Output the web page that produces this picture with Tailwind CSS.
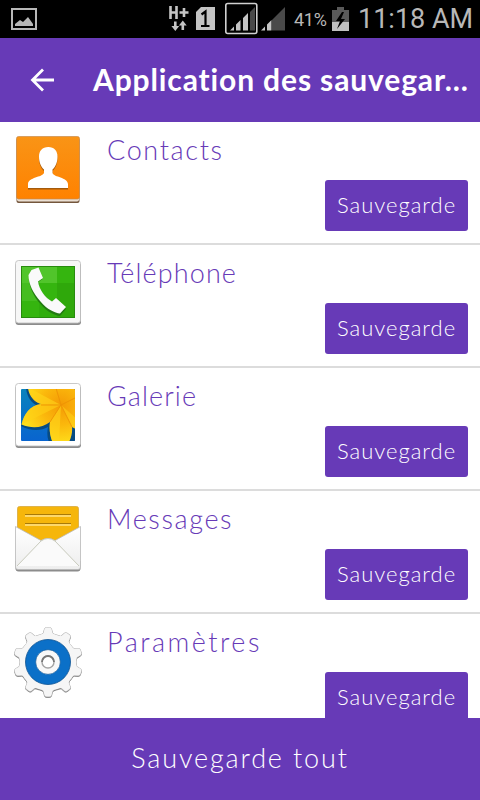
<!DOCTYPE html>
<html lang="fr">

<head>
    <meta charset="UTF-8">
    <meta name="viewport" content="width=device-width, initial-scale=1.0">
    <title>Application des sauvegardes</title>
    <script src="https://cdn.jsdelivr.net/npm/@tailwindcss/browser@4"></script>
</head>

<body class="flex h-[800px] w-[480px] flex-col overflow-hidden bg-white font-['Lato',sans-serif]">
    <!-- status bar -->
    <div class="flex h-[38px] shrink-0 items-center bg-black pl-[11px] pr-[7px] font-['Roboto',sans-serif] text-[#b8b8b8]">
        <svg class="h-[22px] w-[26px]" viewBox="0 0 26 22">
            <rect x="1" y="1" width="24" height="20" fill="none" stroke="#b8b8b8" stroke-width="2" />
            <path d="M4 18v-2l5-4 3 2 5-5 5 7v2z" fill="#b8b8b8" />
        </svg>
        <svg class="ml-auto h-[38px] w-[120px] shrink-0" viewBox="167 0 120 38">
            <path d="M170.500 6v13M176.500 6v13M170.500 12.500h6M184 8v9M179.500 12.500h9" stroke="#c4c4c4" stroke-width="2.600" fill="none" />
            <path d="M174 21.500h2.600v4.500h2.600l-3.900 5-3.900-5h2.600zM181.500 30h2.600v-4.500h2.600l-3.900-5-3.900 5h2.600z" fill="#c4c4c4" />
            <path d="M196 12l5-5h14v23h-19z" fill="#c4c4c4" />
            <path d="M201.500 14.500l4-3V26M201 26h8.500" stroke="#000" stroke-width="2.200" fill="none" />
            <rect x="225.800" y="3.500" width="31" height="30" rx="2" fill="none" stroke="#d0d0d0" stroke-width="1.600" />
            <path d="M230 30.500h4v-4zM236 30.500h4.500V20l-4.500 4.500zM243 30.500h5V13l-5 5z" fill="#c4c4c4" />
            <path d="M250 30.500h5V7l-5 5z" fill="#4a4a4a" />
            <path d="M272 30.500h13V7l-13 13z" fill="#4a4a4a" />
            <path d="M261 30.500h4v-4zM267 30.500h4.500V20l-4.500 4.500z" fill="#c4c4c4" />
        </svg>
        <span class="ml-[7px] w-[34px] whitespace-nowrap pt-[2px] text-[18px] leading-[38px] tracking-[-0.3px]">41%</span>
        <svg class="ml-[4px] h-[24px] w-[17px] shrink-0" viewBox="0 0 17 24">
            <path d="M0 3h5V0h7v3h5v21H0z" fill="#5a5a5a" />
            <path d="M0 15h17v9H0z" fill="#c0c0c0" />
            <path d="M10 5L4 14h4l-3 8 8-10H9l3-7z" fill="#000" />
        </svg>
        <span class="ml-[9px] w-[115px] whitespace-nowrap text-[27px] leading-[38px]">11:18 AM</span>
    </div>

    <!-- header -->
    <header class="flex h-[84px] shrink-0 items-center bg-[#673ab7] pl-[30px] text-white">
        <svg class="h-[24px] w-[25px] shrink-0" viewBox="0 0 25 24">
            <path d="M13 1.500L2.500 12 13 22.500M2.500 12H24" fill="none" stroke="#fff" stroke-width="2.800" />
        </svg>
        <h1 class="ml-[38px] whitespace-nowrap pb-[2px] text-[30px] font-bold leading-[40px] tracking-[0.87px]">Application des sauvegar...</h1>
    </header>

    <!-- app list -->
    <main class="min-h-0 flex-1 overflow-hidden text-[#673ab7]">
        <div class="flex h-[123px] border-b-2 border-[#dcdcdc] pl-3 pr-3 pt-2">
            <svg class="h-[76px] w-[72px] shrink-0" viewBox="12 8 72 76">
                <defs>
                    <linearGradient id="orange" x1="0" y1="0" x2="0" y2="1">
                        <stop offset="0" stop-color="#f99416" />
                        <stop offset="1" stop-color="#ff8200" />
                    </linearGradient>
                </defs>
                <rect x="16.500" y="16" width="63" height="65" rx="2" fill="#74563c" />
                <rect x="17" y="15" width="62" height="64.500" rx="2" fill="#eadfd3" />
                <rect x="16.500" y="14.500" width="63" height="62.500" rx="2" fill="url(#orange)" stroke="#c98b4c" stroke-width=".7" />
                <path d="M48.300 26.500c-6 0-9.300 4-9.300 9.500 0 6 2 10.500 5 13v3.500c-2 4.500-15.500 4-16 11v4h40v-4c-.500-7-14-6.500-15.500-11V49c3-2.500 5-7 5-13 0-5.500-3.200-9.500-9.200-9.500z" fill="#a45a0c" />
                <path d="M48.300 25c-6 0-9.300 4-9.300 9.500 0 6 2 10.500 5 13V51c-2 4.500-15.500 4-16 11v4h40v-4c-.500-7-14-6.500-15.500-11v-3.500c3-2.500 5-7 5-13 0-5.500-3.200-9.500-9.200-9.500z" fill="#fff" />
            </svg>
            <h2 class="ml-[23px] text-[27px] font-light leading-[40px] tracking-[1.65px]">Contacts</h2>
            <button class="mb-3 ml-auto h-[51px] w-[143px] self-end rounded-[3px] bg-[#673ab7] pb-[2px] text-[22px] font-light tracking-[1px] text-white">Sauvegarde</button>
        </div>

        <div class="flex h-[123px] border-b-2 border-[#dcdcdc] pl-3 pr-3 pt-2">
            <svg class="h-[76px] w-[72px] shrink-0" viewBox="12 8 72 76">
                <rect x="15.500" y="18" width="65.500" height="62" rx="3" fill="#8c8c8c" />
                <rect x="15.500" y="15.500" width="65" height="62.500" rx="3" fill="#f7f7f7" stroke="#bbb" stroke-width=".8" />
                <rect x="21.500" y="21.500" width="53" height="51" fill="#35b50f" stroke="#278b0d" />
                <path d="M22 22h35v16H22z" fill="#51c52b" />
                <path d="M22 38h17v18H22z" fill="#45bd20" />
                <path d="M57 38h17v34H57z" fill="#2fa80b" />
                <path d="M39 56h18v16H39z" fill="#30ad0d" />
                <path d="M29 32l3-5 6-3 4.500 10-4.500 3c1.500 9 7 15.500 14 20l4-3.500L66 64l-6 7c-5-.500-13-4-19.500-12C33 51 29 41 29 32z" fill="#237b12" />
                <path d="M28.500 30l3-5 7-2.500 4.500 10.500-5 3.500c1.500 8.500 7 16 14 20l4-3.500L66 62l-6 6.500c-5-.500-13-4-19.500-12C33 48 28.500 39 28.500 30z" fill="#fafafa" />
            </svg>
            <h2 class="ml-[23px] text-[27px] font-light leading-[40px] tracking-[1.1px]">Téléphone</h2>
            <button class="mb-3 ml-auto h-[51px] w-[143px] self-end rounded-[3px] bg-[#673ab7] pb-[2px] text-[22px] font-light tracking-[1px] text-white">Sauvegarde</button>
        </div>

        <div class="flex h-[123px] border-b-2 border-[#dcdcdc] pl-3 pr-3 pt-2">
            <svg class="h-[76px] w-[72px] shrink-0" viewBox="12 8 72 76">
                <defs>
                    <clipPath id="photo">
                        <rect x="21" y="21" width="54" height="52" rx="1" />
                    </clipPath>
                    <linearGradient id="sky" x1="0" y1="0" x2="0" y2="1">
                        <stop offset="0" stop-color="#0a83bd" />
                        <stop offset="1" stop-color="#0964cf" />
                    </linearGradient>
                    <radialGradient id="petal" gradientUnits="userSpaceOnUse" cx="61" cy="37" r="40">
                        <stop offset="0" stop-color="#f49a05" />
                        <stop offset=".5" stop-color="#fbb80c" />
                        <stop offset="1" stop-color="#ffe01c" />
                    </radialGradient>
                </defs>
                <rect x="15.500" y="18" width="65.500" height="62" rx="3" fill="#8c8c8c" />
                <rect x="15.500" y="15.500" width="65" height="62.500" rx="3" fill="#fff" stroke="#bbb" stroke-width=".8" />
                <g clip-path="url(#photo)">
                    <rect x="21" y="21" width="54" height="52" fill="url(#sky)" />
                    <path d="M26 20c1 9 5 15 12 18-9 2-14 10-17 20 9 5 20 5 27 1-1 5-1 10 1 15h26V20z" fill="#074b83" />
                    <!-- petals -->
                    <path d="M28 20c1 8 6 14 13 16-11 1-17 10-19.500 20.500C32 61 42 60 50 54c-1 7 0 14 2.500 20H69c2.500-5 3.500-10 3-15l4 2V20z" fill="url(#petal)" />
                    <path d="M61 37L41 36C30 38 24 46 21.500 56.500z" fill="#ffd015" opacity=".6" />
                    <path d="M61 37L50 54c-1 7 0 14 2.500 20H59z" fill="#ffd51a" opacity=".6" />
                    <path d="M61 37L29 20c2 9 7 15 12 16z" fill="#ffd51a" opacity=".6" />
                    <path d="M61 37l11 22 4 2V50z" fill="#ffd51a" opacity=".5" />
                    <path d="M61 37L50 54M61 37l11 22M61 37l14-7M61 37l-5-17M61 37H41" stroke="#ed9206" stroke-width=".9" fill="none" />
                </g>
            </svg>
            <h2 class="ml-[23px] text-[27px] font-light leading-[40px] tracking-[1.1px]">Galerie</h2>
            <button class="mb-3 ml-auto h-[51px] w-[143px] self-end rounded-[3px] bg-[#673ab7] pb-[2px] text-[22px] font-light tracking-[1px] text-white">Sauvegarde</button>
        </div>

        <div class="flex h-[123px] border-b-2 border-[#dcdcdc] pl-3 pr-3 pt-2">
            <svg class="h-[76px] w-[72px] shrink-0" viewBox="12 8 72 76">
                <defs>
                    <linearGradient id="paper" x1="0" y1="0" x2="0" y2="1">
                        <stop offset="0" stop-color="#fff" />
                        <stop offset="1" stop-color="#ededed" />
                    </linearGradient>
                </defs>
                <rect x="17.500" y="15.500" width="61" height="45" rx="2" fill="#f6b60b" stroke="#d8a83c" stroke-width=".8" />
                <path d="M25 23.500h46M25 32.500h46" stroke="#a87a08" stroke-width="1" />
                <path d="M25 25h46M25 34h46" stroke="#ffe48c" stroke-width="1.500" />
                <path d="M15.500 70v7.500q0 3 3 3h59q3 0 3-3V70z" fill="#8c8c8c" />
                <path d="M15.500 35.500L41 49.500q7-4 14 0l25.500-14V76q0 2.500-2.500 2.500H18q-2.500 0-2.500-2.500z" fill="url(#paper)" stroke="#b8b8b8" stroke-width=".8" />
                <path d="M17 75L41 50q7-5 14 0l24 25" fill="#fafafa" stroke="#c9cbbd" />
            </svg>
            <h2 class="ml-[23px] text-[27px] font-light leading-[40px] tracking-[1.6px]">Messages</h2>
            <button class="mb-3 ml-auto h-[51px] w-[143px] self-end rounded-[3px] bg-[#673ab7] pb-[2px] text-[22px] font-light tracking-[1px] text-white">Sauvegarde</button>
        </div>

        <div class="flex h-[123px] border-b-2 border-[#dcdcdc] pl-3 pr-3 pt-2">
            <svg class="h-[76px] w-[72px] shrink-0" viewBox="12 8 72 76">
                <defs>
                    <g id="tooth">
                        <path d="M40 22l3.500-3 1-4q.500-1.500 2-1.500h3q1.500 0 2 1.500l1 4 3.500 3z" />
                    </g>
                    <g id="gear">
                        <circle cx="48" cy="48" r="28.500" />
                        <use href="#tooth" />
                        <use href="#tooth" transform="rotate(36 48 48)" />
                        <use href="#tooth" transform="rotate(72 48 48)" />
                        <use href="#tooth" transform="rotate(108 48 48)" />
                        <use href="#tooth" transform="rotate(144 48 48)" />
                        <use href="#tooth" transform="rotate(180 48 48)" />
                        <use href="#tooth" transform="rotate(216 48 48)" />
                        <use href="#tooth" transform="rotate(252 48 48)" />
                        <use href="#tooth" transform="rotate(288 48 48)" />
                        <use href="#tooth" transform="rotate(324 48 48)" />
                    </g>
                </defs>
                <use href="#gear" y="1" fill="#777" stroke="#777" stroke-width=".6" />
                <use href="#gear" fill="#b5b5b5" stroke="#b5b5b5" stroke-width="1" />
                <use href="#gear" fill="#f6f6f6" />
                <circle cx="48" cy="48" r="22.500" fill="#0b70c8" stroke="#0b5292" stroke-width=".8" />
                <circle cx="48" cy="48" r="12.300" fill="#f8f8f8" stroke="#0b5292" stroke-width=".6" />
                <circle cx="48" cy="48" r="6" fill="#fff" stroke="#a5a5a5" stroke-width="1.400" />
                <path d="M42 48a6 6 0 0 1 12 0" fill="none" stroke="#777" stroke-width="1.800" />
            </svg>
            <h2 class="ml-[23px] text-[27px] font-light leading-[40px] tracking-[2.5px]">Paramètres</h2>
            <button class="mb-3 ml-auto h-[51px] w-[143px] self-end rounded-[3px] bg-[#673ab7] pb-[2px] text-[22px] font-light tracking-[1px] text-white">Sauvegarde</button>
        </div>
    </main>

    <button class="h-[82px] w-full shrink-0 bg-[#673ab7] pb-[2px] text-[27px] font-light tracking-[1.85px] text-white">Sauvegarde tout</button>
</body>

</html>
